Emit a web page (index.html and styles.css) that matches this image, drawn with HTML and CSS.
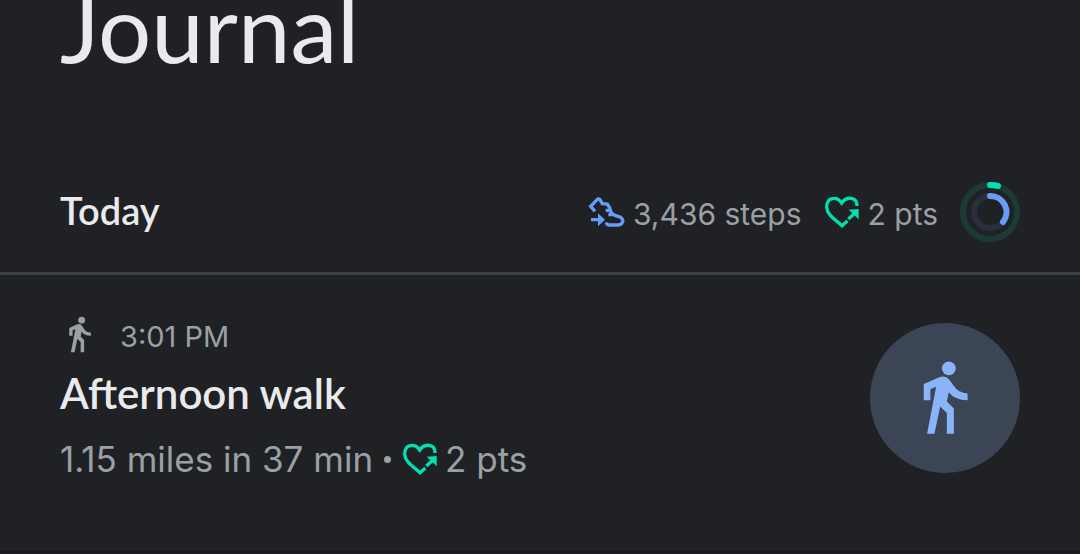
FILE: index.html
```
<!DOCTYPE html>
<html lang="en">
<head>
<meta charset="utf-8">
<meta name="viewport" content="width=device-width, initial-scale=1">
<title>Journal</title>
<link rel="stylesheet" href="styles.css">
</head>
<body>
<svg class="symbols" aria-hidden="true">
  <symbol id="walk" viewBox="190 142 140 224">
    <circle cx="270" cy="167" r="20.500"/>
    <path d="M195 214 L240 194 Q256 187 268 197 Q276 206 285 220 Q298 241 326 242 V262 Q286 261 270 238 L264 266 L285 287 V362 H264 V300 L244 281 L227 362 H205 L232 222 L215 229 V262 H195Z"/>
  </symbol>
  <symbol id="heart" viewBox="27 45 108 102">
    <path d="M126 78 C127 51 96 47 80 69 C65 47 34 52 35 82 C36 103 58 117 81 137 L97 123 M100 117 L117 102" fill="none" stroke="currentColor" stroke-width="10"/>
    <path d="M101 89 L131 87 V118Z"/>
  </symbol>
</svg>
<main class="journal">
  <h1 class="page-title">Journal</h1>
  <section>
    <header class="day">
      <h2 class="day-name">Today</h2>
      <div class="totals">
        <span class="stat steps">
          <svg class="shoe-icon" viewBox="36 48 111 96" aria-hidden="true">
            <path d="M57 94 L44 79 L64 58 Q67 55 72 59 L79 71 L94 72 L101 83 L105 97 Q110 104 119 107 L134 112 Q142 118 140 125 Q137 135 127 135 H99 Q92 135 91 127 M89 91 H104 M97 104 H112 M45 119 H68" fill="none" stroke="currentColor" stroke-width="10"/>
            <path d="M66 100 L87 119 L66 139Z"/>
          </svg>
          <span class="stat-value">3,436 steps</span>
        </span>
        <span class="stat points">
          <svg class="heart-icon" aria-hidden="true"><use href="#heart"/></svg>
          <span class="stat-value">2 pts</span>
        </span>
        <svg class="rings" viewBox="0 0 60 60" role="img" aria-label="Daily goal progress">
          <circle class="track-points" cx="30" cy="30" r="27"/>
          <circle class="track-steps" cx="30" cy="30" r="16"/>
          <path class="arc-points" d="M30 3 A27 27 0 0 1 38 4"/>
          <path class="arc-steps" d="M30 14 A16 16 0 0 1 43 40"/>
        </svg>
      </div>
    </header>
    <article class="entry">
      <div class="entry-text">
        <div class="entry-time">
          <svg class="walk-small" aria-hidden="true"><use href="#walk"/></svg>
          <time datetime="15:01">3:01 PM</time>
        </div>
        <h3 class="entry-name">Afternoon walk</h3>
        <p class="entry-detail">
          <span>1.15 miles in 37 min</span>
          <span class="dot"></span>
          <svg class="heart-icon" aria-hidden="true"><use href="#heart"/></svg>
          <span>2 pts</span>
        </p>
      </div>
      <div class="badge">
        <svg class="walk-large" aria-hidden="true"><use href="#walk"/></svg>
      </div>
    </article>
  </section>
</main>
</body>
</html>
```
FILE: styles.css
```
* {
  box-sizing: border-box;
}

body {
  margin: 0;
  background: #202124;
  color: #e8eaed;
  font-family: Lato, "Open Sans", sans-serif;
}

svg {
  display: block;
  flex: none;
  fill: currentColor;
}

h1, h2, h3, p {
  margin: 0;
}

.symbols {
  display: none;
}

.journal {
  overflow: hidden;
  border-bottom: 2px solid #1b191c;
}

.page-title {
  margin-top: -28px;
  padding: 0 60px;
  font-size: 94px;
  font-weight: 400;
  line-height: 110px;
}

.day {
  display: flex;
  align-items: center;
  justify-content: space-between;
  margin-top: 70px;
  padding: 0 60px;
  height: 123px;
  border-bottom: 3px solid #3c4043;
}

.day-name {
  padding-bottom: 4px;
  font-size: 38px;
  font-weight: 600;
  line-height: 40px;
}

.totals, .stat {
  display: flex;
  align-items: center;
}

.totals {
  gap: 22px;
  color: #9aa0a6;
  font-family: Inter, sans-serif;
  font-size: 30px;
  line-height: 36px;
}

.stat {
  gap: 8px;
}

.stat-value {
  padding-top: 4px;
}

.shoe-icon {
  width: 37px;
  height: 32px;
  color: #669df6;
}

.heart-icon {
  width: 36px;
  height: 34px;
  color: #00e0b0;
}

.rings {
  width: 60px;
  height: 60px;
  fill: none;
  stroke-width: 6;
  stroke-linecap: round;
}

.track-points {
  stroke: #1c3a35;
}

.track-steps {
  stroke: #282f3e;
}

.arc-points {
  stroke: #00e0b0;
}

.arc-steps {
  stroke: #669df6;
}

.entry {
  display: flex;
  align-items: center;
  justify-content: space-between;
  padding: 41px 60px 72px;
}

.entry-time {
  display: flex;
  align-items: center;
  gap: 28px;
  padding-left: 8px;
  color: #9aa0a6;
  font-family: Inter, sans-serif;
  font-size: 29px;
  line-height: 40px;
}

.walk-small {
  width: 24px;
  height: 37px;
  margin-bottom: 4px;
}

.entry-name {
  margin-top: 12px;
  font-size: 42px;
  font-weight: 600;
  line-height: 48px;
}

.entry-detail {
  display: flex;
  align-items: center;
  gap: 7px;
  margin-top: 22px;
  color: #9aa0a6;
  font-family: Inter, sans-serif;
  font-size: 35px;
  line-height: 40px;
}

.dot {
  width: 7px;
  height: 7px;
  margin: 0 4px;
  border-radius: 50%;
  background: currentColor;
}

.badge {
  display: grid;
  flex: none;
  place-items: center;
  width: 150px;
  height: 150px;
  border-radius: 50%;
  background: #3b4556;
  color: #8ab4f8;
}

.walk-large {
  width: 47px;
  height: 75px;
}
```
